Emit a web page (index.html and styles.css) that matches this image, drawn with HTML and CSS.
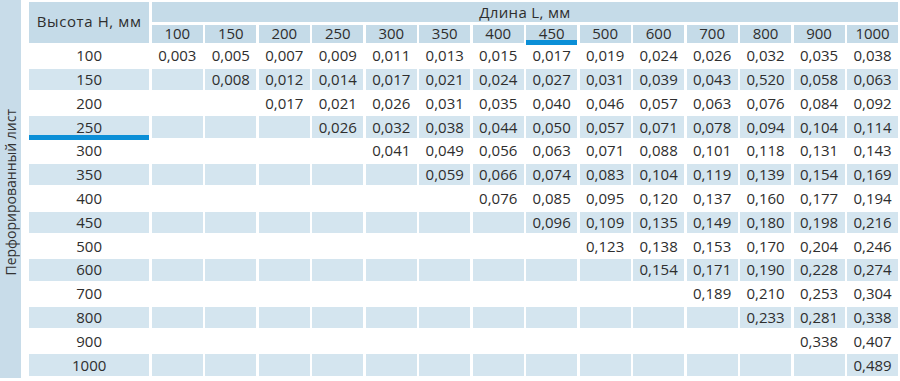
FILE: index.html
```html
<!DOCTYPE html>
<html lang="ru">
<head>
<meta charset="utf-8">
<title>Перфорированный лист</title>
<link rel="stylesheet" href="styles.css">
</head>
<body>
<div class="page">
  <div class="side"><span class="side-text">Перфорированный лист</span></div>
  <div class="table">
    <div class="head">
      <div class="h-label">Высота Н, мм</div>
      <div class="h-title">Длина L, мм</div>
      <div class="hc">100</div><div class="hc">150</div><div class="hc">200</div><div class="hc">250</div><div class="hc">300</div><div class="hc">350</div><div class="hc">400</div><div class="hc mark">450</div><div class="hc">500</div><div class="hc">600</div><div class="hc">700</div><div class="hc">800</div><div class="hc">900</div><div class="hc">1000</div>
    </div>
    <div class="row"><div class="lab">100</div><div>0,003</div><div>0,005</div><div>0,007</div><div>0,009</div><div>0,011</div><div>0,013</div><div>0,015</div><div>0,017</div><div>0,019</div><div>0,024</div><div>0,026</div><div>0,032</div><div>0,035</div><div>0,038</div></div>
    <div class="row alt"><div class="lab">150</div><div></div><div>0,008</div><div>0,012</div><div>0,014</div><div>0,017</div><div>0,021</div><div>0,024</div><div>0,027</div><div>0,031</div><div>0,039</div><div>0,043</div><div>0,520</div><div>0,058</div><div>0,063</div></div>
    <div class="row"><div class="lab">200</div><div></div><div></div><div>0,017</div><div>0,021</div><div>0,026</div><div>0,031</div><div>0,035</div><div>0,040</div><div>0,046</div><div>0,057</div><div>0,063</div><div>0,076</div><div>0,084</div><div>0,092</div></div>
    <div class="row alt"><div class="lab mark">250</div><div></div><div></div><div></div><div>0,026</div><div>0,032</div><div>0,038</div><div>0,044</div><div>0,050</div><div>0,057</div><div>0,071</div><div>0,078</div><div>0,094</div><div>0,104</div><div>0,114</div></div>
    <div class="row"><div class="lab">300</div><div></div><div></div><div></div><div></div><div>0,041</div><div>0,049</div><div>0,056</div><div>0,063</div><div>0,071</div><div>0,088</div><div>0,101</div><div>0,118</div><div>0,131</div><div>0,143</div></div>
    <div class="row alt"><div class="lab">350</div><div></div><div></div><div></div><div></div><div></div><div>0,059</div><div>0,066</div><div>0,074</div><div>0,083</div><div>0,104</div><div>0,119</div><div>0,139</div><div>0,154</div><div>0,169</div></div>
    <div class="row"><div class="lab">400</div><div></div><div></div><div></div><div></div><div></div><div></div><div>0,076</div><div>0,085</div><div>0,095</div><div>0,120</div><div>0,137</div><div>0,160</div><div>0,177</div><div>0,194</div></div>
    <div class="row alt"><div class="lab">450</div><div></div><div></div><div></div><div></div><div></div><div></div><div></div><div>0,096</div><div>0,109</div><div>0,135</div><div>0,149</div><div>0,180</div><div>0,198</div><div>0,216</div></div>
    <div class="row"><div class="lab">500</div><div></div><div></div><div></div><div></div><div></div><div></div><div></div><div></div><div>0,123</div><div>0,138</div><div>0,153</div><div>0,170</div><div>0,204</div><div>0,246</div></div>
    <div class="row alt"><div class="lab">600</div><div></div><div></div><div></div><div></div><div></div><div></div><div></div><div></div><div></div><div>0,154</div><div>0,171</div><div>0,190</div><div>0,228</div><div>0,274</div></div>
    <div class="row"><div class="lab">700</div><div></div><div></div><div></div><div></div><div></div><div></div><div></div><div></div><div></div><div></div><div>0,189</div><div>0,210</div><div>0,253</div><div>0,304</div></div>
    <div class="row alt"><div class="lab">800</div><div></div><div></div><div></div><div></div><div></div><div></div><div></div><div></div><div></div><div></div><div></div><div>0,233</div><div>0,281</div><div>0,338</div></div>
    <div class="row"><div class="lab">900</div><div></div><div></div><div></div><div></div><div></div><div></div><div></div><div></div><div></div><div></div><div></div><div></div><div>0,338</div><div>0,407</div></div>
    <div class="row alt"><div class="lab">1000</div><div></div><div></div><div></div><div></div><div></div><div></div><div></div><div></div><div></div><div></div><div></div><div></div><div></div><div>0,489</div></div>
  </div>
</div>
</body>
</html>
```
FILE: styles.css
```css
html, body {
  margin: 0;
  padding: 0;
  background: #ffffff;
}
body {
  font-family: "Open Sans", "Noto Sans", sans-serif;
  font-size: 15px;
  color: #2e2e2e;
}
.page {
  display: flex;
  align-items: flex-start;
  gap: 8px;
  width: 900px;
  height: 381px;
}
.side {
  width: 21px;
  height: 378px;
  background: #c8dce9;
  display: flex;
  align-items: center;
  justify-content: center;
  flex: none;
}
.side-text {
  writing-mode: vertical-rl;
  transform: rotate(180deg);
  font-size: 14px;
  line-height: 21px;
  white-space: nowrap;
  color: #333;
  padding-bottom: 6px;
}
.table {
  margin-top: 2px;
  width: 869px;
  display: flex;
  flex-direction: column;
  gap: 2.5px;
}
.head {
  display: grid;
  grid-template-columns: 120.3px repeat(14, 1fr);
  grid-template-rows: 20px 18px;
  column-gap: 2.6px;
  row-gap: 2.6px;
}
.head > div {
  background: #c5dbe8;
  display: flex;
  align-items: center;
  justify-content: center;
  line-height: 1;
}
.h-label {
  grid-row: span 2;
  padding-bottom: 2px;
  letter-spacing: 0.6px;
}
.h-title {
  grid-column: span 14;
  letter-spacing: 0.35px;
}
.row {
  display: grid;
  grid-template-columns: 120.3px repeat(14, 1fr);
  column-gap: 2.6px;
  height: 21.3px;
}
.row > div {
  display: flex;
  align-items: center;
  justify-content: center;
  line-height: 1;
}
.row.alt > div {
  background: #d4e5ef;
}
.mark {
  box-shadow: inset 0 -3px 0 #0b8fd7, 0 2px 0 #0b8fd7;
}
```
